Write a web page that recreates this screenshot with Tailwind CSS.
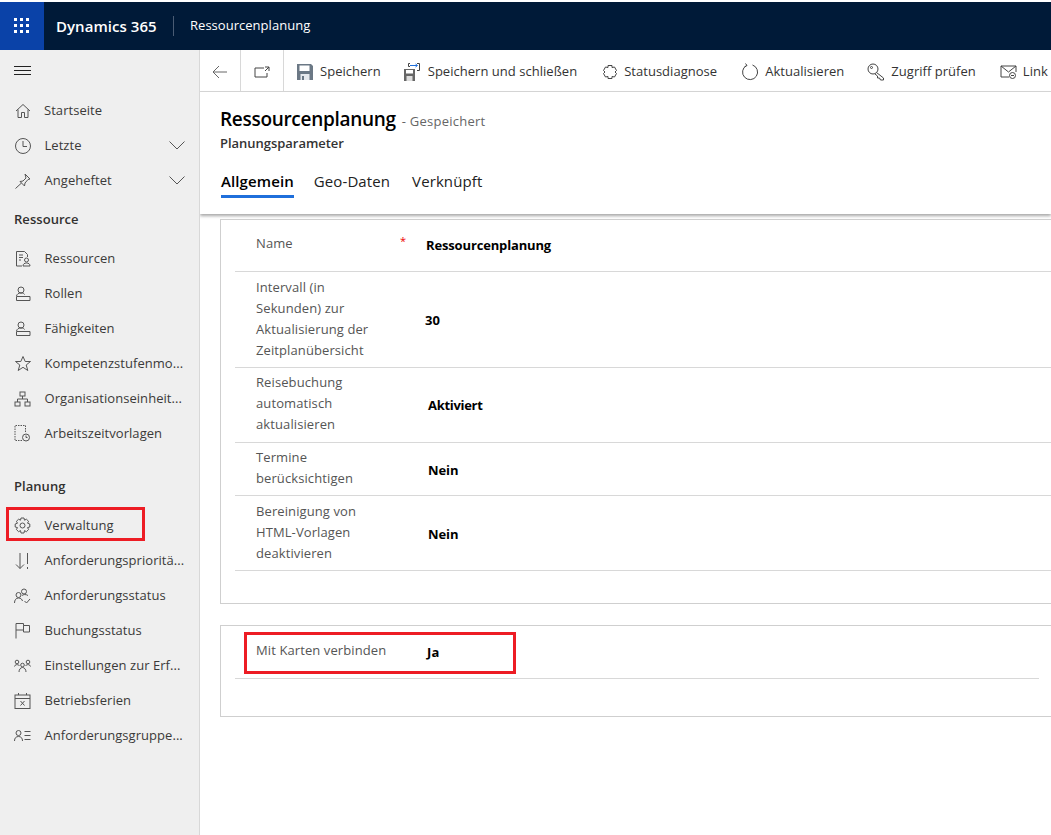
<!DOCTYPE html>
<html lang="de">
<head>
  <meta charset="UTF-8" />
  <title>Ressourcenplanung</title>
  <script src="https://cdn.jsdelivr.net/npm/@tailwindcss/browser@4"></script>
</head>
<body class="h-[835px] w-[1051px] overflow-hidden bg-white font-['Open_Sans','Liberation_Sans',sans-serif] text-[13px] text-[#333]">

  <!-- Top bar -->
  <header class="mt-[2px] flex h-[48px] items-center bg-[#001a38] text-white">
    <div class="flex h-full w-[44px] items-center justify-center bg-[#0a42a8]">
      <svg width="16" height="16" viewBox="0 0 16 16" fill="#fff">
        <rect x="0" y="0" width="3" height="3"/><rect x="6" y="0" width="3" height="3"/><rect x="12" y="0" width="3" height="3"/>
        <rect x="0" y="6" width="3" height="3"/><rect x="6" y="6" width="3" height="3"/><rect x="12" y="6" width="3" height="3"/>
        <rect x="0" y="12" width="3" height="3"/><rect x="6" y="12" width="3" height="3"/><rect x="12" y="12" width="3" height="3"/>
      </svg>
    </div>
    <span class="ml-[12px] w-[101px] whitespace-nowrap text-[15px] font-semibold tracking-[0.05px]">Dynamics 365</span>
    <span class="ml-[16px] h-[20px] w-px bg-[#4a5c74]"></span>
    <span class="ml-[16px] text-[13px] tracking-[0.03px]">Ressourcenplanung</span>
  </header>

  <div class="flex h-[785px]">
    <!-- Sidebar -->
    <aside class="relative w-[200px] shrink-0 border-r border-[#d8d8d8] bg-[#efefef] text-[13px] tracking-[0.05px] text-[#3b3a39]">
      <div class="flex h-[42px] items-center pl-[14px]">
        <svg width="17" height="10" viewBox="0 0 17 10" stroke="#222" fill="none"><path d="M0 .5h17M0 4.500h17M0 8.500h17"/></svg>
      </div>

      <nav class="mt-[1px] flex flex-col">
        <a class="flex h-[35px] items-center">
          <svg class="ml-[14px]" width="18" height="18" viewBox="0 0 18 18" fill="none" stroke="#555"><path d="M2 9l7-6.500L16 9M4 7.500V15.500h3.500V10.500h3V15.500H14V7.500"/></svg>
          <span class="ml-[12px]">Startseite</span>
        </a>
        <a class="flex h-[35px] items-center">
          <svg class="ml-[14px]" width="18" height="18" viewBox="0 0 18 18" fill="none" stroke="#555"><circle cx="9" cy="9" r="7.500"/><path d="M9 4v5.500h4"/></svg>
          <span class="ml-[12.500px]">Letzte</span>
          <svg class="ml-auto mr-[14px]" width="16" height="9" viewBox="0 0 16 9" fill="none" stroke="#555"><path d="M.5.5L8 8l7.500-7.500"/></svg>
        </a>
        <a class="flex h-[35px] items-center">
          <svg class="ml-[14px]" width="18" height="18" viewBox="0 0 18 18" fill="none" stroke="#555"><path d="M11 2l5 5-2 .5-3 3.500-.5 3L6 9.500l3-.5 3-3zM7.500 11L1.500 16.500"/></svg>
          <span class="ml-[12.500px]">Angeheftet</span>
          <svg class="ml-auto mr-[14px]" width="16" height="9" viewBox="0 0 16 9" fill="none" stroke="#555"><path d="M.5.5L8 8l7.500-7.500"/></svg>
        </a>

        <h2 class="mt-[7px] flex h-[30px] items-center pl-[14px] font-semibold text-[#323130]">Ressource</h2>

        <div class="mt-[6px] flex flex-col">
          <a class="flex h-[35px] items-center">
            <svg class="ml-[15px]" width="16" height="17" viewBox="0 0 16 17" fill="none" stroke="#555"><path d="M7 16H1.500V1.500h8l3 3V7M4 5h4M4 7.500h4M4 10h2"/><circle cx="11.500" cy="10" r="2"/><path d="M8 16c0-2 1.500-3 3.500-3s3.500 1 3.500 3z"/></svg>
            <span class="ml-[13.500px]">Ressourcen</span>
          </a>
          <a class="flex h-[35px] items-center">
            <svg class="ml-[15px]" width="16" height="16" viewBox="0 0 16 16" fill="none" stroke="#555"><circle cx="6" cy="4" r="3"/><path d="M1.500 10c.5-2 2-3 4.500-3s3 .5 3.500 1.500M1.500 10.500H15v4H1.500z"/></svg>
            <span class="ml-[13.500px]">Rollen</span>
          </a>
          <a class="flex h-[35px] items-center">
            <svg class="ml-[15px]" width="16" height="16" viewBox="0 0 16 16" fill="none" stroke="#555"><circle cx="6" cy="4" r="3"/><path d="M1.500 10c.5-2 2-3 4.500-3s3 .5 3.500 1.500M1.500 10.500H15v4H1.500z"/></svg>
            <span class="ml-[13.500px]">Fähigkeiten</span>
          </a>
          <a class="flex h-[35px] items-center">
            <svg class="ml-[14px]" width="18" height="17" viewBox="0 0 18 17" fill="none" stroke="#555"><path d="M9 1.500l2.200 5h5.300l-4.300 3.500 1.600 5.500L9 12.300l-4.800 3.200 1.600-5.500L1.500 6.500h5.300z"/></svg>
            <span class="ml-[12.500px]">Kompetenzstufenmo...</span>
          </a>
          <a class="flex h-[35px] items-center">
            <svg class="ml-[14px]" width="17" height="16" viewBox="0 0 17 16" fill="none" stroke="#555"><rect x="6" y="1" width="5" height="4"/><rect x="1" y="11" width="5" height="4"/><rect x="11" y="11" width="5" height="4"/><path d="M8.500 5v3M3.500 11V8h10v3"/></svg>
            <span class="ml-[13.500px]">Organisationseinheit...</span>
          </a>
          <a class="flex h-[35px] items-center">
            <svg class="ml-[14px]" width="17" height="17" viewBox="0 0 17 17" fill="none" stroke="#555"><path stroke-dasharray="1.500 1" d="M8 15.500H1V.5h10.500v7"/><circle cx="12" cy="12.500" r="3.500"/><path d="M12 10.500v2h1.500"/></svg>
            <span class="ml-[13.500px]">Arbeitszeitvorlagen</span>
          </a>
        </div>

        <h2 class="mt-[21px] flex h-[30px] items-center pl-[14px] font-semibold text-[#323130]">Planung</h2>

        <div class="mt-[6px] flex flex-col">
          <a class="flex h-[35px] items-center">
            <svg class="ml-[14px]" width="17" height="17" viewBox="0 0 17 17" fill="none" stroke="#555"><circle cx="8.500" cy="8.500" r="2.500"/><path d="M7 1h3l.5 2.200 1.900-1 2.200 2.100-1.100 1.900L15.800 7v3l-2.300.6 1.100 1.900-2.200 2.200-1.900-1.100L10 16H7l-.5-2.400-1.900 1.100-2.200-2.200 1.100-1.900L1.200 10V7l2.300-.8-1.100-1.900 2.200-2.100 1.900 1z"/></svg>
            <span class="ml-[13.500px]">Verwaltung</span>
          </a>
          <a class="flex h-[35px] items-center">
            <svg class="ml-[15px]" width="16" height="18" viewBox="0 0 16 18" fill="none" stroke="#555"><path d="M5 1v15.500M1 12.500l4 4 4-4M12.500 1v11M12.500 15v2"/></svg>
            <span class="ml-[13.500px]">Anforderungspriorit&auml;...</span>
          </a>
          <a class="flex h-[35px] items-center">
            <svg class="ml-[14px]" width="17" height="16" viewBox="0 0 17 16" fill="none" stroke="#555"><circle cx="10" cy="3.500" r="2.500"/><circle cx="4.500" cy="7" r="2.500"/><path d="M.5 15c0-3 1.500-5 4-5s3.500 1.500 4 3M8 7.500c1-1 4-1.500 6 0M10.500 13l2 2 3.500-4"/></svg>
            <span class="ml-[13.500px]">Anforderungsstatus</span>
          </a>
          <a class="flex h-[35px] items-center">
            <svg class="ml-[15px]" width="15" height="17" viewBox="0 0 15 17" fill="none" stroke="#555"><path d="M1 16.500V1.500h7.500v2H14.500V10H8.500V8H1M8.500 3.500V8"/></svg>
            <span class="ml-[14.500px]">Buchungsstatus</span>
          </a>
          <a class="flex h-[35px] items-center">
            <svg class="ml-[14px]" width="17" height="14" viewBox="0 0 17 14" fill="none" stroke="#555"><circle cx="3" cy="3" r="1.800"/><circle cx="14" cy="3" r="1.800"/><circle cx="8.500" cy="6" r="1.800"/><path d="M.5 7.500C1 5.500 3 5 5.500 6.500M16.500 7.500C16 5.500 14 5 11.500 6.500M5 13c0-2.500 1.500-4.500 3.500-4.500S12 10.500 12 13"/></svg>
            <span class="ml-[13.500px]">Einstellungen zur Erf...</span>
          </a>
          <a class="flex h-[35px] items-center">
            <svg class="ml-[14px]" width="17" height="16" viewBox="0 0 17 16" fill="none" stroke="#555"><rect x="1" y="2" width="15" height="13.500"/><path d="M1 5.500h15M4.500 0v2M12.500 0v2M6.500 8l4 4.500M10.500 8l-4 4.500"/></svg>
            <span class="ml-[13.500px]">Betriebsferien</span>
          </a>
          <a class="flex h-[35px] items-center">
            <svg class="ml-[14px]" width="17" height="12" viewBox="0 0 17 12" fill="none" stroke="#555"><circle cx="4.500" cy="3" r="2.500"/><path d="M.5 11c0-3 1.500-4.500 4-4.500s4 1.500 4 4.500M10.500 1.500h6M10.500 5.500h6M10.500 9.500h6"/></svg>
            <span class="ml-[13.500px]">Anforderungsgruppe...</span>
          </a>
        </div>
      </nav>

      <!-- Red annotation -->
      <div class="absolute left-[6px] top-[457px] h-[34px] w-[139px] border-[3px] border-[#ed1c24]"></div>
    </aside>

    <!-- Main -->
    <main class="relative flex-1 overflow-hidden">
      <!-- Command bar -->
      <div class="flex h-[42px] items-center whitespace-nowrap border-b border-[#d8d8d8] text-[13px] tracking-[0.03px] text-[#333]">
        <div class="flex h-full w-[41px] items-center justify-center border-r border-[#d8d8d8] pt-[2px]">
          <svg width="16" height="14" viewBox="0 0 16 14" fill="none" stroke="#666"><path d="M15 7H1M7 1L1 7l6 6"/></svg>
        </div>
        <div class="flex h-full w-[43px] items-center justify-center border-r border-[#d8d8d8] pt-[2px]">
          <svg width="16" height="12" viewBox="0 0 16 12" fill="none" stroke="#444"><path d="M10 2H1v9h12V7M11 1h4v4M15 1l-4 4"/></svg>
        </div>
        <div class="flex h-full items-center pt-[2px]">
          <svg class="ml-[13px]" width="16" height="16" viewBox="0 0 16 16" fill="none"><path fill="#6b7885" d="M0 0h14l2 2v14H0z"/><path fill="#fff" d="M2.500 1.500h10V7h-10z"/><path fill="#e6e9ed" d="M3.500 10h9v6h-9z"/><path fill="#6b7885" d="M5 12h2v4H5z"/></svg>
          <span class="ml-[7px]">Speichern</span>
          <svg class="ml-[23px]" width="16" height="18" viewBox="0 0 16 18" fill="none"><path fill="#666" d="M0 6h11v12H0z"/><path fill="#fff" d="M2 7h7v3.500H2z"/><path fill="#ddd" d="M2.500 13h6v5h-6z"/><path stroke="#444" d="M6 .5H4.500v3H6M13 .5h2.500v7H13"/><path stroke="#1f6fdb" d="M6 2.500h7M11.500 1l2 1.500-2 1.500"/></svg>
          <span class="ml-[8px]">Speichern und schließen</span>
          <svg class="ml-[25px]" width="16" height="16" viewBox="0 0 16 16" fill="none" stroke="#444"><path d="M6 1.500h4v2l2.500-.5 2 3.500-1.500 1.500 1.500 1.500-2 3.500-2.500-.5v2H6v-2l-2.500.5-2-3.500L3 8 1.500 6.500l2-3.500L6 3.500z"/></svg>
          <span class="ml-[6px]">Statusdiagnose</span>
          <svg class="ml-[24px]" width="18" height="18" viewBox="0 0 18 18" fill="none" stroke="#444"><path d="M11.500 2A7.500 7.500 0 1 1 5.500 2.500M4.500 .5l1.500 2-2.500 1.500"/></svg>
          <span class="ml-[6px]">Aktualisieren</span>
          <svg class="ml-[23px]" width="18" height="18" viewBox="0 0 18 18" fill="none" stroke="#444"><circle cx="6" cy="6" r="5"/><circle cx="4.500" cy="4.500" r="1"/><path d="M9.500 9.500l7 5.500v2h-3l-1-2h-2v-2l-2.500-2"/></svg>
          <span class="ml-[6px]">Zugriff prüfen</span>
          <svg class="ml-[24px]" width="17" height="14" viewBox="0 0 17 14" fill="none" stroke="#444"><path d="M9 12H1V1h15v6M1 1l7.500 6L16 1"/><circle cx="12.500" cy="10.500" r="3"/><path d="M11 10.500h3"/></svg>
          <span class="ml-[6px]">Link</span>
        </div>
      </div>

      <!-- Record header -->
      <div class="h-[122px] shadow-[0_2px_3px_rgba(0,0,0,0.35)]">
        <div class="flex items-baseline whitespace-nowrap pl-[20px] pt-[13px]">
          <h1 class="text-[19px] font-semibold leading-[28px] tracking-[-0.3px] text-black">Ressourcenplanung</h1>
          <span class="ml-[6px] text-[13px] tracking-[0.25px] text-[#666]">- Gespeichert</span>
        </div>
        <p class="mt-[1px] pl-[20px] text-[13px] font-semibold leading-[18px] tracking-[-0.03px] text-[#333]">Planungsparameter</p>
        <div class="ml-[21px] mt-[18px] flex text-[15px] leading-[22px] tracking-[0.1px] text-[#222]">
          <a class="border-b-[3px] border-[#1f6fdb] pb-[3px] font-semibold text-black">Allgemein</a>
          <a class="ml-[20px]">Geo-Daten</a>
          <a class="ml-[22px]">Verknüpft</a>
        </div>
      </div>

      <!-- Section one -->
      <section class="ml-[20px] mt-[5px] h-[385px] w-[900px] border border-[#cfcfcf] pl-[14px] tracking-[0.1px]">
        <div class="flex h-[52px] items-center border-b border-[#d8d8d8] pl-[21px]">
          <span class="-mt-[3px] w-[144px] text-[#555]">Name</span>
          <span class="-mt-[8px] w-[26px] text-[11px] text-[#e00]">*</span>
          <span class="mt-[1px] text-[13px] font-bold tracking-[-0.15px] text-black">Ressourcenplanung</span>
        </div>
        <div class="flex h-[96px] items-center border-b border-[#d8d8d8] pl-[21px]">
          <span class="-mt-[2px] w-[169px] leading-[21px] text-[#555]">Intervall (in<br>Sekunden) zur<br>Aktualisierung der<br>Zeitplanübersicht</span>
          <span class="mt-[2px] text-[13px] font-bold text-black">30</span>
        </div>
        <div class="flex h-[75px] items-center border-b border-[#d8d8d8] pl-[21px]">
          <span class="-mt-[4px] w-[172px] leading-[21px] text-[#555]">Reisebuchung<br>automatisch<br>aktualisieren</span>
          <span class="mt-[2px] text-[13px] font-bold tracking-[-0.3px] text-black">Aktiviert</span>
        </div>
        <div class="flex h-[53px] items-center border-b border-[#d8d8d8] pl-[21px]">
          <span class="-mt-[2px] w-[172px] leading-[21px] text-[#555]">Termine<br>berücksichtigen</span>
          <span class="mt-[3px] text-[13px] font-bold tracking-[-0.1px] text-black">Nein</span>
        </div>
        <div class="flex h-[75px] items-center border-b border-[#d8d8d8] pl-[21px]">
          <span class="-mt-[2px] w-[172px] leading-[21px] text-[#555]">Bereinigung von<br>HTML-Vorlagen<br>deaktivieren</span>
          <span class="mt-[3px] text-[13px] font-bold tracking-[-0.1px] text-black">Nein</span>
        </div>
      </section>

      <!-- Section two -->
      <section class="ml-[20px] mt-[21px] h-[92px] w-[900px] border border-[#cfcfcf] pl-[14px] tracking-[0.1px]">
        <div class="flex h-[53px] w-[804px] items-center border-b border-[#d8d8d8] pl-[21px]">
          <span class="-mt-[3px] w-[171px] text-[#555]">Mit Karten verbinden</span>
          <span class="mt-[1px] text-[13px] font-bold text-black">Ja</span>
        </div>
      </section>

      <!-- Red annotation -->
      <div class="absolute left-[44px] top-[582px] h-[42px] w-[272px] border-[3px] border-[#ed1c24]"></div>
    </main>
  </div>
</body>
</html>
